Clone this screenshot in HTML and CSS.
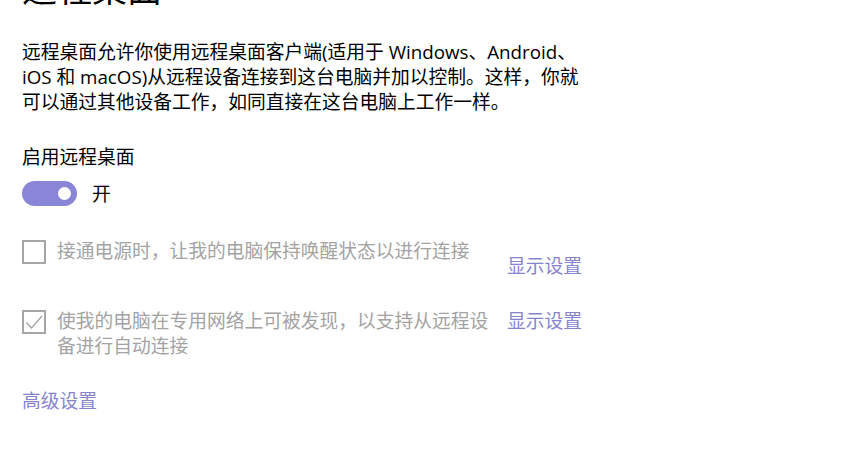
FILE: index.html
```html
<!DOCTYPE html>
<html lang="zh-CN">
<head>
<meta charset="utf-8">
<link rel="stylesheet" href="styles.css">
</head>
<body>
<div class="page">
  <h1 class="title">远程桌面</h1>
  <p class="desc">远程桌面允许你使用远程桌面客户端(适用于 Windows、Android、<br>iOS 和 macOS)从远程设备连接到这台电脑并加以控制。这样，你就<br>可以通过其他设备工作，如同直接在这台电脑上工作一样。</p>
  <div class="label">启用远程桌面</div>
  <div class="toggle-row">
    <span class="toggle"><span class="knob"></span></span>
    <span class="toggle-text">开</span>
  </div>
  <div class="check-row first">
    <span class="box"></span>
    <span class="check-text">接通电源时，让我的电脑保持唤醒状态以进行连接</span>
    <a class="link link-low">显示设置</a>
  </div>
  <div class="check-row second">
    <span class="box"><svg width="20" height="20" viewBox="0 0 20 20"><path d="M2.5 10.5 L7.5 16 L18 4" fill="none" stroke="#a3a3a3" stroke-width="1.3"/></svg></span>
    <span class="check-text">使我的电脑在专用网络上可被发现，以支持从远程设<br>备进行自动连接</span>
    <a class="link">显示设置</a>
  </div>
  <a class="link adv">高级设置</a>
</div>
</body>
</html>
```
FILE: styles.css
```css
html, body {
  margin: 0;
  padding: 0;
  background: #ffffff;
  overflow: hidden;
}
body {
  font-family: "Segoe UI", "Open Sans", "Noto Sans CJK SC", sans-serif;
  font-size: 18.75px;
  line-height: 25px;
  color: #000;
}
.page {
  padding-left: 22px;
}
.title {
  margin: -33px 0 0 0;
  font-size: 35px;
  line-height: 40px;
  font-weight: normal;
  font-family: "Noto Sans CJK SC", sans-serif;
}
.desc {
  margin: 32px 0 0 0;
}
.label {
  margin-top: 30px;
}
.toggle-row {
  display: flex;
  align-items: center;
  gap: 15px;
  margin-top: 12px;
}
.toggle {
  width: 55px;
  height: 25px;
  border-radius: 13px;
  background: #8a86d7;
  display: flex;
  align-items: center;
  justify-content: flex-end;
  padding-right: 6px;
  box-sizing: border-box;
}
.knob {
  width: 13px;
  height: 13px;
  border-radius: 50%;
  background: #fff;
}
.toggle-text {
  line-height: 25px;
}
.check-row {
  display: flex;
  align-items: flex-start;
}
.check-row.first {
  margin-top: 32px;
}
.check-row.second {
  margin-top: 30px;
}
.box {
  width: 24px;
  height: 24px;
  border: 2px solid #a6a6a6;
  box-sizing: border-box;
  margin-top: 2px;
  margin-right: 11px;
  display: flex;
  align-items: center;
  justify-content: center;
  flex: none;
}
.check-text {
  width: 440px;
  color: #a3a3a3;
  flex: none;
}
.link {
  color: #8784cf;
  text-decoration: none;
  margin-left: 10px;
}
.link-low {
  margin-top: 15px;
}
.adv {
  display: block;
  margin-left: 0;
  margin-top: 30px;
}
```
